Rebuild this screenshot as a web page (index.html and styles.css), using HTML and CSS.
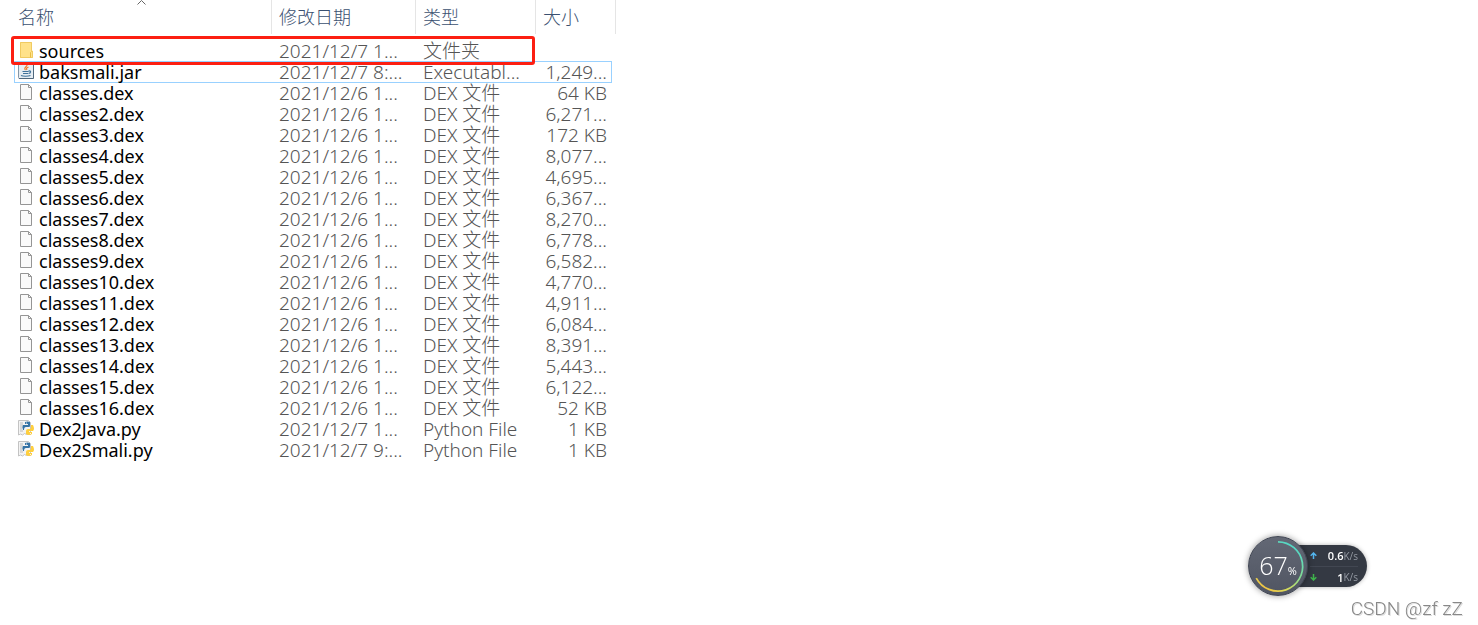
FILE: index.html
```html
<!DOCTYPE html>
<html lang="zh-CN">
<head>
    <meta charset="UTF-8">
    <meta name="viewport" content="width=device-width, initial-scale=1.0">
    <title>sources</title>
    <link rel="stylesheet" href="styles.css">
</head>
<body>
    <!-- icon shapes shared by the rows -->
    <svg class="defs" width="0" height="0" aria-hidden="true">
        <symbol id="folder" viewBox="0 0 16 16">
            <path d="M2 0h12v9h1v7H2z" fill="#ffe28a"/>
            <path d="M2.500 .5h11v8.500h1v6.500h-12z" fill="none" stroke="#f0cb62"/>
            <path d="M12.500 15.500v-5l1-1" fill="none" stroke="#e9bd45"/>
        </symbol>
        <symbol id="file" viewBox="0 0 16 16">
            <path d="M2.500 .5h8l3 3v12h-11z" fill="#fafafa" stroke="#959595"/>
            <path d="M10.500 .5v3h3" fill="none" stroke="#959595"/>
        </symbol>
        <symbol id="jar" viewBox="0 0 16 16">
            <rect x=".5" y=".5" width="15" height="15" rx="1" fill="#e6edf3" stroke="#8497a8"/>
            <path d="M1 15.500h14.500V2" fill="none" stroke="#50687d"/>
            <path d="M9 1.500c1 2-4 3-1.500 5.500M10.500 4c-2 1-2.500 1.500-1.500 3" fill="none" stroke="#ee7b2d" stroke-width="1.200"/>
            <path d="M4.500 8.500h6M5 10.500h5M10.500 8c3-.5 2.500 2 0 2.500M3 12.500c2 1 7 1 9.500 0" fill="none" stroke="#40739b" stroke-width="1.200"/>
        </symbol>
        <symbol id="python" viewBox="0 0 16 16">
            <path d="M.5 .5h10l2 2v12h-4l-2-1-2 1.500-2-1-2 1z" fill="#f3f3f3" stroke="#c3c3c3"/>
            <path d="M2 3h3M2 5h3M2 7h2M2 9h2M2 11h3" stroke="#bbb"/>
            <path d="M7 2q3-1 5 0v4q0 1-1 1H8q-2 0-2 3H5Q3.500 7 5 5h5V4H7z" fill="#3673a5"/>
            <path d="M13 5h2q2 4 0 6h-4v1h3v2q-3 2-6 0v-3q0-2 2-2h2q1 0 1-2z" fill="#ffcf3e"/>
            <circle cx="8.500" cy="3" r=".6" fill="#fff"/>
            <circle cx="12.500" cy="13.500" r=".6" fill="#fff"/>
        </symbol>
    </svg>

    <main class="explorer">
        <table class="files">
            <colgroup>
                <col class="col-name">
                <col class="col-date">
                <col class="col-type">
                <col class="col-size">
                <col class="col-end">
            </colgroup>
            <thead>
                <tr>
                    <th>名称<svg class="sort" viewBox="0 0 9 5" aria-hidden="true"><path d="M.5 4.500l4-4 4 4" fill="none" stroke="#666"/></svg></th>
                    <th>修改日期</th>
                    <th>类型</th>
                    <th colspan="2">大小</th>
                </tr>
            </thead>
            <tbody>
                <tr><td><svg class="icon"><use href="#folder"/></svg>sources</td><td>2021/12/7 1...</td><td>文件夹</td><td></td></tr>
                <tr class="selected"><td><svg class="icon"><use href="#jar"/></svg>baksmali.jar</td><td>2021/12/7 8:...</td><td>Executabl...</td><td>1,249...</td></tr>
                <tr><td><svg class="icon"><use href="#file"/></svg>classes.dex</td><td>2021/12/6 1...</td><td>DEX 文件</td><td>64 KB</td></tr>
                <tr><td><svg class="icon"><use href="#file"/></svg>classes2.dex</td><td>2021/12/6 1...</td><td>DEX 文件</td><td>6,271...</td></tr>
                <tr><td><svg class="icon"><use href="#file"/></svg>classes3.dex</td><td>2021/12/6 1...</td><td>DEX 文件</td><td>172 KB</td></tr>
                <tr><td><svg class="icon"><use href="#file"/></svg>classes4.dex</td><td>2021/12/6 1...</td><td>DEX 文件</td><td>8,077...</td></tr>
                <tr><td><svg class="icon"><use href="#file"/></svg>classes5.dex</td><td>2021/12/6 1...</td><td>DEX 文件</td><td>4,695...</td></tr>
                <tr><td><svg class="icon"><use href="#file"/></svg>classes6.dex</td><td>2021/12/6 1...</td><td>DEX 文件</td><td>6,367...</td></tr>
                <tr><td><svg class="icon"><use href="#file"/></svg>classes7.dex</td><td>2021/12/6 1...</td><td>DEX 文件</td><td>8,270...</td></tr>
                <tr><td><svg class="icon"><use href="#file"/></svg>classes8.dex</td><td>2021/12/6 1...</td><td>DEX 文件</td><td>6,778...</td></tr>
                <tr><td><svg class="icon"><use href="#file"/></svg>classes9.dex</td><td>2021/12/6 1...</td><td>DEX 文件</td><td>6,582...</td></tr>
                <tr><td><svg class="icon"><use href="#file"/></svg>classes10.dex</td><td>2021/12/6 1...</td><td>DEX 文件</td><td>4,770...</td></tr>
                <tr><td><svg class="icon"><use href="#file"/></svg>classes11.dex</td><td>2021/12/6 1...</td><td>DEX 文件</td><td>4,911...</td></tr>
                <tr><td><svg class="icon"><use href="#file"/></svg>classes12.dex</td><td>2021/12/6 1...</td><td>DEX 文件</td><td>6,084...</td></tr>
                <tr><td><svg class="icon"><use href="#file"/></svg>classes13.dex</td><td>2021/12/6 1...</td><td>DEX 文件</td><td>8,391...</td></tr>
                <tr><td><svg class="icon"><use href="#file"/></svg>classes14.dex</td><td>2021/12/6 1...</td><td>DEX 文件</td><td>5,443...</td></tr>
                <tr><td><svg class="icon"><use href="#file"/></svg>classes15.dex</td><td>2021/12/6 1...</td><td>DEX 文件</td><td>6,122...</td></tr>
                <tr><td><svg class="icon"><use href="#file"/></svg>classes16.dex</td><td>2021/12/6 1...</td><td>DEX 文件</td><td>52 KB</td></tr>
                <tr><td><svg class="icon"><use href="#python"/></svg>Dex2Java.py</td><td>2021/12/7 1...</td><td>Python File</td><td>1 KB</td></tr>
                <tr><td><svg class="icon"><use href="#python"/></svg>Dex2Smali.py</td><td>2021/12/7 9:...</td><td>Python File</td><td>1 KB</td></tr>
            </tbody>
        </table>
        <div class="highlight"></div>
    </main>

    <!-- floating speed ball -->
    <aside class="monitor">
        <div class="ball">
            <svg class="ring" viewBox="0 0 60 60" aria-hidden="true">
                <defs>
                    <linearGradient id="ringColor" x1="50" y1="4" x2="18" y2="54" gradientUnits="userSpaceOnUse">
                        <stop offset="0" stop-color="#45d5d5"/>
                        <stop offset=".5" stop-color="#83dc94"/>
                        <stop offset=".8" stop-color="#d5dc5c"/>
                        <stop offset="1" stop-color="#efc444"/>
                    </linearGradient>
                </defs>
                <path d="M30 5A25.500 25.500 0 1 1 7.500 42.500" fill="none" stroke="url(#ringColor)" stroke-width="1.800"/>
            </svg>
            <span class="percent">67</span><span class="sign">%</span>
        </div>
        <div class="speeds">
            <div class="speed">
                <svg class="arrow" viewBox="0 0 7 7"><path d="M3.500 7V1M.7 3.800l2.800-2.800 2.800 2.800" fill="none" stroke="#53b5ee" stroke-width="1.500"/></svg>
                <b>0.6</b><span>K/s</span>
            </div>
            <div class="speed">
                <svg class="arrow" viewBox="0 0 7 7"><path d="M3.500 0v6M.7 3.200l2.800 2.800 2.800-2.800" fill="none" stroke="#3eb54b" stroke-width="1.500"/></svg>
                <b>1</b><span>K/s</span>
            </div>
        </div>
    </aside>

    <div class="watermark">CSDN @zf zZ</div>
</body>
</html>
```
FILE: styles.css
```css
body {
    margin: 0;
    min-height: 100vh;
    background-color: #fff;
    color: #000;
    font-family: "Noto Sans", "Noto Sans CJK SC", sans-serif;
    font-size: 18px;
}
.defs {
    position: absolute;
}
.explorer {
    position: relative;
    padding-left: 14px;
}

/* file list */
.files {
    table-layout: fixed;
    width: 602px;
    border-collapse: separate;
    border-spacing: 0;
    line-height: 21px;
    white-space: nowrap;
}
.col-name {
    width: 258px;
}
.col-date {
    width: 144px;
}
.col-type {
    width: 120px;
}
.col-size {
    width: 76px;
}
.col-end {
    width: 4px;
}
.files th {
    position: relative;
    height: 34px;
    padding: 0 7px 2px;
    box-sizing: border-box;
    border-right: 1px solid #e5e5e5;
    color: #3a5070;
    font-family: "Noto Sans CJK SC", sans-serif;
    font-weight: 300;
    text-align: left;
}
.files th:first-child {
    padding-left: 4px;
}
.sort {
    position: absolute;
    top: 0;
    left: 123px;
    width: 9px;
    height: 5px;
}
.files tbody::before {
    content: "";
    display: table-row;
    height: 7px;
}
.files td {
    height: 21px;
    padding: 0 7px;
    color: #555;
    font-size: 19px;
    font-weight: 300;
}
.files td:first-child {
    padding-left: 4px;
    color: #000;
    font-size: 18px;
    font-weight: 400;
}
.files td:last-child {
    padding: 0 5px 0 0;
    text-align: right;
}
.icon {
    width: 16px;
    height: 16px;
    margin-right: 5px;
    vertical-align: 0;
}
.selected td {
    box-shadow: 0 -1px #99d1ff, inset 0 -1px #99d1ff;
}
.selected td:first-child {
    box-shadow: 0 -1px #99d1ff, inset 0 -1px #99d1ff, inset 1px 0 #99d1ff;
}
.selected td:last-child {
    box-shadow: 0 -1px #99d1ff, inset 0 -1px #99d1ff, inset -1px 0 #99d1ff;
}

/* red frame over the first row */
.highlight {
    position: absolute;
    top: 36px;
    left: 11px;
    width: 524px;
    height: 29px;
    box-sizing: border-box;
    border: 3px solid #fc1f12;
    border-radius: 3px;
}

/* speed ball */
.monitor {
    position: fixed;
    right: 111px;
    bottom: 29px;
    display: flex;
    align-items: center;
    color: #fff;
    font-family: "Open Sans", sans-serif;
}
.ball {
    position: relative;
    z-index: 1;
    display: flex;
    align-items: center;
    justify-content: center;
    width: 60px;
    height: 60px;
    box-sizing: border-box;
    border: 1px solid #414653;
    border-radius: 50%;
    background: linear-gradient(#636875, #505562);
    box-shadow: 0 0 6px rgba(0, 0, 0, 0.4);
}
.ring {
    position: absolute;
    inset: 0;
}
.percent {
    padding-bottom: 2px;
    font-size: 25px;
    font-weight: 300;
}
.sign {
    padding-top: 8px;
    font-size: 11px;
}
.speeds {
    width: 78px;
    height: 42px;
    margin-left: -19px;
    box-sizing: border-box;
    padding: 0 9px 0 21px;
    border-radius: 0 21px 21px 0;
    background-color: #343943;
    box-shadow: 0 0 4px rgba(0, 0, 0, 0.3);
}
.speed {
    display: flex;
    align-items: center;
    height: 21px;
    box-sizing: border-box;
    font-size: 11px;
}
.speed + .speed {
    border-top: 1px solid #424752;
}
.speed b {
    margin-left: auto;
    font-weight: 600;
}
.speed span {
    color: #9499a3;
    font-size: 10px;
}
.arrow {
    width: 7px;
    height: 7px;
}

.watermark {
    position: fixed;
    right: 15px;
    bottom: 6px;
    color: #888;
    font-family: Roboto, Arial, sans-serif;
    font-size: 19px;
    font-weight: 300;
    line-height: 21px;
    text-shadow: 1px 1px #ddd;
}
```
